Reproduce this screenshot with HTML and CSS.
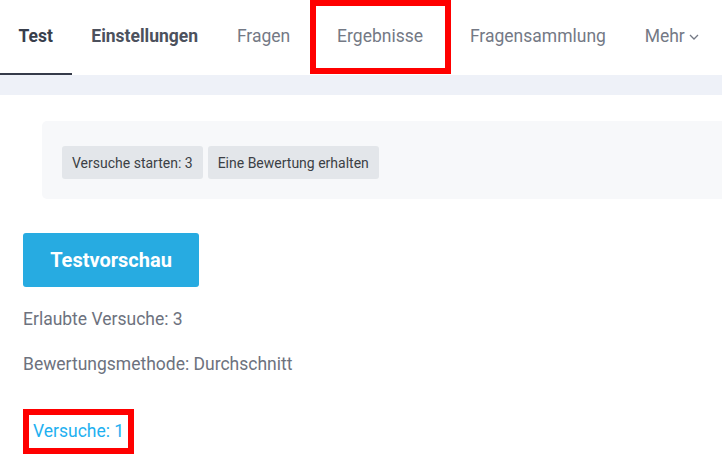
FILE: index.html
```html
<!DOCTYPE html>
<html lang="de">
<head>
<meta charset="utf-8">
<title>Test</title>
<link rel="stylesheet" href="styles.css">
</head>
<body>
<nav class="tabs">
  <a class="tab tab-active">Test</a>
  <a class="tab tab-bold">Einstellungen</a>
  <a class="tab">Fragen</a>
  <a class="tab tab-marked">Ergebnisse</a>
  <a class="tab">Fragensammlung</a>
  <a class="tab">Mehr<svg class="chev" width="10" height="6" viewBox="0 0 10 6"><polyline points="1,1 5,5 9,1" fill="none" stroke="#747985" stroke-width="1.3"/></svg></a>
</nav>
<div class="band"></div>
<main class="content">
  <div class="card">
    <span class="badge">Versuche starten: 3</span>
    <span class="badge">Eine Bewertung erhalten</span>
  </div>
  <button class="btn">Testvorschau</button>
  <p class="info">Erlaubte Versuche: 3</p>
  <p class="info">Bewertungsmethode: Durchschnitt</p>
  <a class="attempts">Versuche: 1</a>
</main>
</body>
</html>
```
FILE: styles.css
```css
html, body {
  margin: 0;
  padding: 0;
  background: #ffffff;
  overflow: hidden;
  font-family: Roboto, "Liberation Sans", sans-serif;
}
.tabs {
  display: flex;
  height: 75px;
  align-items: flex-start;
}
.tab {
  display: flex;
  align-items: center;
  padding: 0 19.4px 4px 19.4px;
  font-size: 17.5px;
  color: #747985;
  box-sizing: border-box;
  height: 75px;
  white-space: nowrap;
}
.tab-active {
  font-weight: 700;
  color: #383e4b;
  border-bottom: 2px solid #353b49;
  padding: 0 19px 2px 18.5px;
}
.tab-bold {
  font-weight: 700;
  color: #4c515d;
}
.tab-marked {
  border: 6px solid #ff0000;
  height: 74px;
  padding: 0 21.5px 3px 21.5px;
}
.chev {
  margin-left: 4px;
  margin-top: 3px;
}
.band {
  height: 20px;
  background: #eef1f8;
}
.content {
  padding: 26px 0 0 23px;
}
.card {
  margin: 0 -30px 0 19px;
  background: #f7f8fa;
  border-radius: 5px;
  padding: 25px 20px 20px 20px;
  display: flex;
  gap: 5px;
}
.badge {
  display: inline-flex;
  align-items: center;
  height: 33px;
  padding: 0 10px;
  background: #e3e6ea;
  border-radius: 3px;
  font-size: 14px;
  color: #3b3f45;
}
.btn {
  margin-top: 34px;
  width: 176px;
  height: 54px;
  background: #27abe1;
  border: none;
  border-radius: 3px;
  color: #ffffff;
  font-family: Roboto, "Liberation Sans", sans-serif;
  font-size: 20px;
  font-weight: 700;
  display: block;
}
.info {
  margin: 20px 0 0 0;
  font-size: 17.5px;
  line-height: 25px;
  color: #6d727e;
}
.info + .info {
  margin-top: 20px;
}
.attempts {
  display: inline-block;
  margin-top: 32px;
  border: 6px solid #ff0000;
  padding: 4px 4px;
  font-size: 17.5px;
  line-height: 25px;
  color: #1eb0f0;
}
```
